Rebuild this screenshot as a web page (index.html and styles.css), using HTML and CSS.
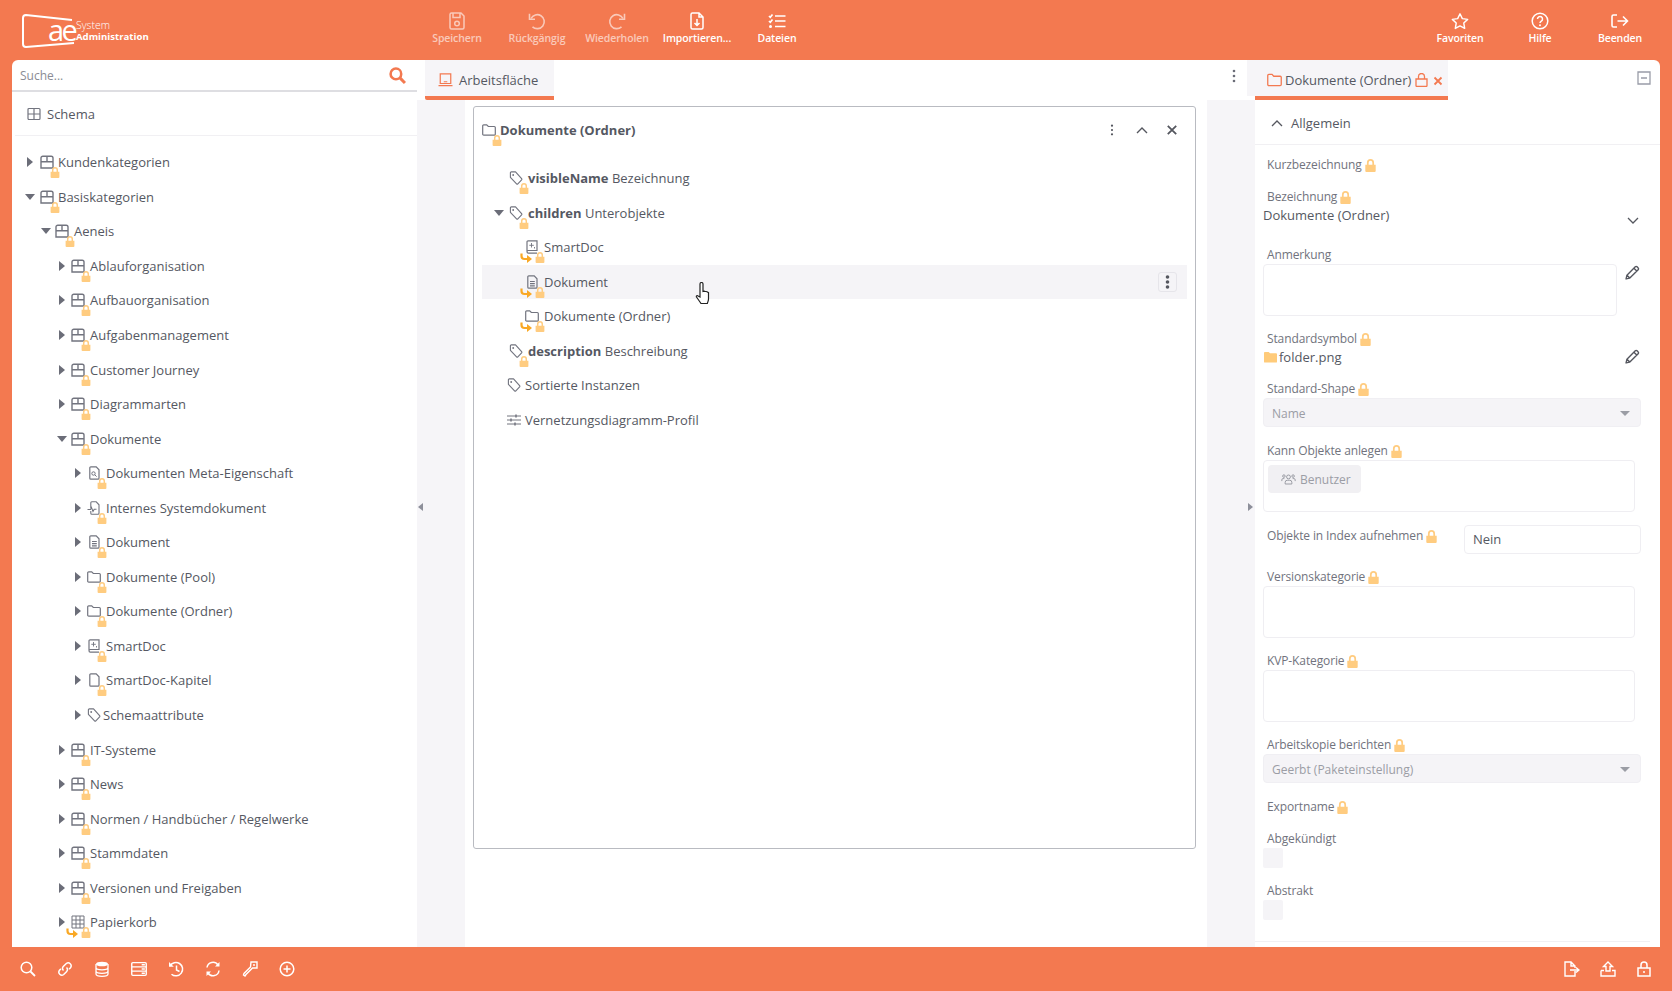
FILE: index.html
```html
<!DOCTYPE html>
<html lang="de">
<head>
  <meta charset="UTF-8">
  <title>System Administration</title>
  <link rel="stylesheet" href="styles.css">
</head>
<body>
  <svg class="sprite" width="0" height="0">
    <symbol id="box" viewBox="0 0 14 14"><path d="M1 13V3A1.800 1.800 0 0 1 2.800 1.200h8.400A1.800 1.800 0 0 1 13 3v10zM1 6.700h12M7 1.200v5.500" fill="none" stroke="currentColor" stroke-width="1.400"/></symbol>
    <symbol id="lock" viewBox="0 0 10 12"><path d="M0.200 5.200h9.600v5.800a1 1 0 0 1-1 1H1.200a1 1 0 0 1-1-1z" fill="#ffcc80"/><path d="M2.500 6V3.400a2.500 2.500 0 0 1 5 0V6" fill="none" stroke="#ffcc80" stroke-width="1.600"/></symbol>
    <symbol id="link" viewBox="0 0 12 10"><path d="M1.500 .5v2.500a3 3 0 0 0 3 3h3.500" fill="none" stroke="#f9a825" stroke-width="2.200"/><path d="M7 2l5 4-5 4z" fill="#f9a825"/></symbol>
    <symbol id="folder" viewBox="0 0 14 12"><path d="M.7 10.200V1.800a1 1 0 0 1 1-1h3l1.600 1.700h6a1 1 0 0 1 1 1v6.700a1 1 0 0 1-1 1H1.700a1 1 0 0 1-1-1z" fill="none" stroke="currentColor" stroke-width="1.200"/></symbol>
    <symbol id="tag" viewBox="0 0 14 15"><path d="M1 2a1 1 0 0 1 1-1h4.500l6.500 7.300a1 1 0 0 1 0 1.300l-4 4.200a1 1 0 0 1-1.400 0L1 6.800z" fill="none" stroke="currentColor" stroke-width="1.200" stroke-linejoin="round"/><circle cx="4" cy="4.300" r="1" fill="currentColor"/></symbol>
    <symbol id="doc" viewBox="0 0 14 14"><path d="M3.800 .8h5.400L12 3.800v8.400a1 1 0 0 1-1 1H3.800a1 1 0 0 1-1-1V1.800a1 1 0 0 1 1-1zM5 6.500h4.800M5 8.700h4.800M5 10.900h4.800" fill="none" stroke="currentColor" stroke-width="1.200"/></symbol>
    <symbol id="page" viewBox="0 0 14 14"><path d="M3.800 .8h5.400L12 3.800v8.400a1 1 0 0 1-1 1H3.800a1 1 0 0 1-1-1V1.800a1 1 0 0 1 1-1z" fill="none" stroke="currentColor" stroke-width="1.200"/></symbol>
    <symbol id="smart" viewBox="0 0 14 14"><path d="M2 11V1.800a1 1 0 0 1 1-1h9v9.700H3.300A1.300 1.300 0 0 0 2 11.800a1.300 1.300 0 0 0 1.300 1.300H12" fill="none" stroke="currentColor" stroke-width="1.200"/><path d="M6.500 3v4.500M4.300 5.300h4.500M9.500 7v1.500" stroke="currentColor" stroke-width=".9"/></symbol>
    <symbol id="metadoc" viewBox="0 0 14 14"><path d="M3.800 .8h5.400L12 3.800v8.400a1 1 0 0 1-1 1H3.800a1 1 0 0 1-1-1V1.800a1 1 0 0 1 1-1z" fill="none" stroke="currentColor" stroke-width="1.200"/><circle cx="6.500" cy="7.500" r="1.700" fill="none" stroke="currentColor"/><path d="M7.800 8.800l1.800 1.800" stroke="currentColor"/></symbol>
    <symbol id="sysdoc" viewBox="0 0 14 14"><path d="M3.800 7V1.800a1 1 0 0 1 1-1h4.400L12 3.800v8.400a1 1 0 0 1-1 1H4.800a1 1 0 0 1-1-1V10M.5 8.500h3l1-2 1.500 4 1.200-2.300H9.500" fill="none" stroke="currentColor" stroke-width="1.100"/></symbol>
    <symbol id="grid" viewBox="0 0 14 14"><path d="M1 1h12v12H1zM1 5h12M1 9h12M5 1v12M9 1v12" fill="none" stroke="currentColor" stroke-width="1"/></symbol>
    <symbol id="table" viewBox="0 0 14 14"><path d="M1 2.500a1 1 0 0 1 1-1h10a1 1 0 0 1 1 1v9a1 1 0 0 1-1 1H2a1 1 0 0 1-1-1zM1 7h12M7 1.500v11" fill="none" stroke="currentColor" stroke-width="1.200"/></symbol>
    <symbol id="sliders" viewBox="0 0 14 12"><path d="M0 2h14M0 6h14M0 10h14" stroke="currentColor" stroke-width="1"/><path d="M9 .5v3M4 4.500v3M8 8.500v3" stroke="currentColor" stroke-width="1.500"/></symbol>
    <symbol id="kebab" viewBox="0 0 4 14"><circle cx="2" cy="2" r="1.300" fill="currentColor"/><circle cx="2" cy="7" r="1.300" fill="currentColor"/><circle cx="2" cy="12" r="1.300" fill="currentColor"/></symbol>
    <symbol id="kebabbold" viewBox="0 0 4 14"><circle cx="2" cy="2" r="1.800" fill="currentColor"/><circle cx="2" cy="7" r="1.800" fill="currentColor"/><circle cx="2" cy="12" r="1.800" fill="currentColor"/></symbol>
    <symbol id="pencil" viewBox="0 0 14 14"><path d="M1 13l.8-3.500L9.600 1.700a1.200 1.200 0 0 1 1.700 0l1 1a1.200 1.200 0 0 1 0 1.700L4.500 12.200zM8.300 3l2.700 2.700M1.800 9.500l2.700 2.700" fill="none" stroke="currentColor" stroke-width="1.300" stroke-linejoin="round"/></symbol>
    <symbol id="save" viewBox="0 0 16 18"><path d="M1 2.500A1.500 1.500 0 0 1 2.500 1H12l3 3v11.500a1.500 1.500 0 0 1-1.500 1.500h-11A1.500 1.500 0 0 1 1 15.500zM4 1v4.500h7V1" fill="none" stroke="currentColor" stroke-width="1.500"/><circle cx="8" cy="11.500" r="2.300" fill="none" stroke="currentColor" stroke-width="1.500"/></symbol>
    <symbol id="undo" viewBox="0 0 18 18"><path d="M4.500 14.800A7 7 0 1 0 3 6.500" fill="none" stroke="currentColor" stroke-width="1.600"/><path d="M1.500 1.800v5.500H7" fill="none" stroke="currentColor" stroke-width="1.600"/></symbol>
    <symbol id="redo" viewBox="0 0 18 18"><path d="M13.500 14.800A7 7 0 1 1 15 6.500" fill="none" stroke="currentColor" stroke-width="1.600"/><path d="M16.500 1.800v5.500H11" fill="none" stroke="currentColor" stroke-width="1.600"/></symbol>
    <symbol id="import" viewBox="0 0 14 18"><path d="M1 2.500A1.500 1.500 0 0 1 2.500 1H9l4 4v10.500a1.500 1.500 0 0 1-1.500 1.500h-9A1.500 1.500 0 0 1 1 15.500zM9 1v4h4M7 7v6.500M4.500 11L7 13.500 9.500 11" fill="none" stroke="currentColor" stroke-width="1.500"/></symbol>
    <symbol id="files" viewBox="0 0 18 16"><path d="M1 3l1.300 1.300L4.500 1.500M1 8l1.300 1.300L4.500 6.500M7 3h10.500M7 8h10.500M7 13.500h10.500" fill="none" stroke="currentColor" stroke-width="1.700"/><circle cx="2.500" cy="13.500" r="1.500" fill="currentColor"/></symbol>
    <symbol id="star" viewBox="0 0 20 19"><path d="M10 1.500l2.600 5.400 5.900.8-4.300 4.100 1 5.900L10 15l-5.200 2.700 1-5.900L1.500 7.700l5.900-.8z" fill="none" stroke="currentColor" stroke-width="1.600" stroke-linejoin="round"/></symbol>
    <symbol id="help" viewBox="0 0 18 18"><circle cx="9" cy="9" r="7.800" fill="none" stroke="currentColor" stroke-width="1.500"/><path d="M6.500 7a2.500 2.500 0 1 1 3.800 2.100c-.9.600-1.300 1-1.300 2" fill="none" stroke="currentColor" stroke-width="1.500"/><circle cx="9" cy="13.200" r="1" fill="currentColor"/></symbol>
    <symbol id="exit" viewBox="0 0 18 14"><path d="M6 1H2.500A1.500 1.500 0 0 0 1 2.500v9A1.500 1.500 0 0 0 2.500 13H6M6.500 7h10M12 2.500L16.500 7 12 11.500" fill="none" stroke="currentColor" stroke-width="1.600"/></symbol>
    <symbol id="search" viewBox="0 0 16 16"><circle cx="6.500" cy="6.500" r="5.300" fill="none" stroke="currentColor" stroke-width="1.500"/><path d="M10.500 10.500L15 15" stroke="currentColor" stroke-width="1.800"/></symbol>
    <symbol id="searchbold" viewBox="0 0 16 16"><circle cx="6.500" cy="6.500" r="5" fill="none" stroke="currentColor" stroke-width="2.400"/><path d="M10.500 10.500L15 15" stroke="currentColor" stroke-width="2.800"/></symbol>
    <symbol id="chain" viewBox="0 0 16 16"><path d="M6.500 9.500a3 3 0 0 1 0-4.200l2.800-2.800a3 3 0 0 1 4.200 4.200l-1.400 1.400M9.500 6.500a3 3 0 0 1 0 4.200l-2.800 2.800a3 3 0 0 1-4.200-4.200l1.400-1.400" fill="none" stroke="currentColor" stroke-width="1.500"/></symbol>
    <symbol id="db" viewBox="0 0 14 16"><ellipse cx="7" cy="3" rx="6" ry="2.300" fill="currentColor"/><path d="M1 3v10c0 1.300 2.700 2.300 6 2.300s6-1 6-2.300V3M1 6.500c0 1.300 2.700 2.300 6 2.300s6-1 6-2.300M1 10c0 1.300 2.700 2.300 6 2.300s6-1 6-2.300" fill="none" stroke="currentColor" stroke-width="1.300"/></symbol>
    <symbol id="server" viewBox="0 0 15 14"><path d="M.7 2a1 1 0 0 1 1-1h11.600a1 1 0 0 1 1 1v10a1 1 0 0 1-1 1H1.700a1 1 0 0 1-1-1zM.7 5h13.600M.7 9h13.600M10 3h3M10 7h3M10 11h3" fill="none" stroke="currentColor" stroke-width="1.300"/></symbol>
    <symbol id="history" viewBox="0 0 16 16"><path d="M3.500 13.200A6.700 6.700 0 1 0 2 5" fill="none" stroke="currentColor" stroke-width="1.500"/><path d="M1 1v4.800h4.800" fill="currentColor"/><path d="M8.500 4.500V9l3 1.500" fill="none" stroke="currentColor" stroke-width="1.500"/></symbol>
    <symbol id="sync" viewBox="0 0 16 16"><path d="M2 6.500A6 6 0 0 1 13 4M14 9.500A6 6 0 0 1 3 12" fill="none" stroke="currentColor" stroke-width="1.500"/><path d="M14.500 1v4.500H10zM1.500 15v-4.500H6z" fill="currentColor"/></symbol>
    <symbol id="key" viewBox="0 0 16 16"><path d="M9 1h6v6h-4.500L4 13.500 3 15 1.500 14l.5-1.500L8.500 6z" fill="none" stroke="currentColor" stroke-width="1.400"/><circle cx="12" cy="4" r="1" fill="currentColor"/></symbol>
    <symbol id="plus" viewBox="0 0 16 16"><circle cx="8" cy="8" r="6.800" fill="none" stroke="currentColor" stroke-width="1.500"/><path d="M4.500 8h7M8 4.500v7" stroke="currentColor" stroke-width="1.500"/></symbol>
    <symbol id="fileout" viewBox="0 0 16 16"><path d="M11 10v5H1V1h6l4 4v2M7 1v4h4M6 9h8M12 6.500L15 9l-3 2.500" fill="none" stroke="currentColor" stroke-width="1.400"/></symbol>
    <symbol id="upload" viewBox="0 0 16 16"><path d="M8 1L3.500 5.500h2.500V10h4V5.500h2.500zM1 9.500V15h14V9.500h-3M4 9.500H1" fill="none" stroke="currentColor" stroke-width="1.400"/></symbol>
    <symbol id="unlock" viewBox="0 0 14 16"><path d="M1 7h12v8H1zM4 7V4a3 3 0 0 1 6 0v3M7 10v2" fill="none" stroke="currentColor" stroke-width="1.500"/></symbol>
    <symbol id="laptop" viewBox="0 0 16 16"><path d="M2 1h12v11H2zM0 14.500h16M6 10h4" fill="none" stroke="currentColor" stroke-width="1.400"/></symbol>
    <symbol id="lockline" viewBox="0 0 13 14"><path d="M1 6h11v6.500a1 1 0 0 1-1 1H2a1 1 0 0 1-1-1zM3.500 6V3.500a3 3 0 0 1 6 0V6" fill="none" stroke="currentColor" stroke-width="1.300"/></symbol>
  </svg>

  <header class="topbar">
    <div class="logo">
      <svg class="logo-frame" viewBox="0 0 58 36"><path d="M52 7L6 2Q3 2 3 5V31Q3 34 6 34L54 30" fill="none" stroke="#fff" stroke-width="2"/></svg>
      <span class="logo-ae">ae</span>
      <span class="logo-text"><span class="logo-small">System</span><b>Administration</b></span>
    </div>
    <nav class="tools">
      <a class="tool off"><svg class="tool-ic"><use href="#save"/></svg>Speichern</a>
      <a class="tool off"><svg class="tool-ic"><use href="#undo"/></svg>Rückgängig</a>
      <a class="tool off"><svg class="tool-ic"><use href="#redo"/></svg>Wiederholen</a>
      <a class="tool"><svg class="tool-ic"><use href="#import"/></svg>Importieren...</a>
      <a class="tool"><svg class="tool-ic"><use href="#files"/></svg>Dateien</a>
    </nav>
    <nav class="tools tools-right">
      <a class="tool"><svg class="tool-ic"><use href="#star"/></svg>Favoriten</a>
      <a class="tool"><svg class="tool-ic"><use href="#help"/></svg>Hilfe</a>
      <a class="tool"><svg class="tool-ic"><use href="#exit"/></svg>Beenden</a>
    </nav>
  </header>

  <main class="shell">
    <aside class="left">
      <div class="search">
        <span>Suche...</span>
        <svg class="search-ic"><use href="#searchbold"/></svg>
      </div>
      <div class="schema"><svg class="ic"><use href="#table"/></svg>Schema</div>
      <ul class="tree">
        <li class="row lv0"><i class="arr"></i><span class="ic-wrap"><svg class="ic"><use href="#box"/></svg><svg class="lk"><use href="#lock"/></svg></span>Kundenkategorien</li>
        <li class="row lv0"><i class="arr open"></i><span class="ic-wrap"><svg class="ic"><use href="#box"/></svg><svg class="lk"><use href="#lock"/></svg></span>Basiskategorien</li>
        <li class="row lv1"><i class="arr open"></i><span class="ic-wrap"><svg class="ic"><use href="#box"/></svg><svg class="lk"><use href="#lock"/></svg></span>Aeneis</li>
        <li class="row lv2"><i class="arr"></i><span class="ic-wrap"><svg class="ic"><use href="#box"/></svg><svg class="lk"><use href="#lock"/></svg></span>Ablauforganisation</li>
        <li class="row lv2"><i class="arr"></i><span class="ic-wrap"><svg class="ic"><use href="#box"/></svg><svg class="lk"><use href="#lock"/></svg></span>Aufbauorganisation</li>
        <li class="row lv2"><i class="arr"></i><span class="ic-wrap"><svg class="ic"><use href="#box"/></svg><svg class="lk"><use href="#lock"/></svg></span>Aufgabenmanagement</li>
        <li class="row lv2"><i class="arr"></i><span class="ic-wrap"><svg class="ic"><use href="#box"/></svg><svg class="lk"><use href="#lock"/></svg></span>Customer Journey</li>
        <li class="row lv2"><i class="arr"></i><span class="ic-wrap"><svg class="ic"><use href="#box"/></svg><svg class="lk"><use href="#lock"/></svg></span>Diagrammarten</li>
        <li class="row lv2"><i class="arr open"></i><span class="ic-wrap"><svg class="ic"><use href="#box"/></svg><svg class="lk"><use href="#lock"/></svg></span>Dokumente</li>
        <li class="row lv3"><i class="arr"></i><span class="ic-wrap"><svg class="ic"><use href="#metadoc"/></svg><svg class="lk"><use href="#lock"/></svg></span>Dokumenten Meta-Eigenschaft</li>
        <li class="row lv3"><i class="arr"></i><span class="ic-wrap"><svg class="ic"><use href="#sysdoc"/></svg><svg class="lk"><use href="#lock"/></svg></span>Internes Systemdokument</li>
        <li class="row lv3"><i class="arr"></i><span class="ic-wrap"><svg class="ic"><use href="#doc"/></svg><svg class="lk"><use href="#lock"/></svg></span>Dokument</li>
        <li class="row lv3"><i class="arr"></i><span class="ic-wrap"><svg class="ic"><use href="#folder"/></svg><svg class="lk"><use href="#lock"/></svg></span>Dokumente (Pool)</li>
        <li class="row lv3"><i class="arr"></i><span class="ic-wrap"><svg class="ic"><use href="#folder"/></svg><svg class="lk"><use href="#lock"/></svg></span>Dokumente (Ordner)</li>
        <li class="row lv3"><i class="arr"></i><span class="ic-wrap"><svg class="ic"><use href="#smart"/></svg><svg class="lk"><use href="#lock"/></svg></span>SmartDoc</li>
        <li class="row lv3"><i class="arr"></i><span class="ic-wrap"><svg class="ic"><use href="#page"/></svg><svg class="lk"><use href="#lock"/></svg></span>SmartDoc-Kapitel</li>
        <li class="row lv3 narrow"><i class="arr"></i><span class="ic-wrap"><svg class="ic"><use href="#tag"/></svg></span>Schemaattribute</li>
        <li class="row lv2"><i class="arr"></i><span class="ic-wrap"><svg class="ic"><use href="#box"/></svg><svg class="lk"><use href="#lock"/></svg></span>IT-Systeme</li>
        <li class="row lv2"><i class="arr"></i><span class="ic-wrap"><svg class="ic"><use href="#box"/></svg><svg class="lk"><use href="#lock"/></svg></span>News</li>
        <li class="row lv2"><i class="arr"></i><span class="ic-wrap"><svg class="ic"><use href="#box"/></svg><svg class="lk"><use href="#lock"/></svg></span>Normen / Handbücher / Regelwerke</li>
        <li class="row lv2"><i class="arr"></i><span class="ic-wrap"><svg class="ic"><use href="#box"/></svg><svg class="lk"><use href="#lock"/></svg></span>Stammdaten</li>
        <li class="row lv2"><i class="arr"></i><span class="ic-wrap"><svg class="ic"><use href="#box"/></svg><svg class="lk"><use href="#lock"/></svg></span>Versionen und Freigaben</li>
        <li class="row lv2"><i class="arr"></i><span class="ic-wrap"><svg class="ic"><use href="#grid"/></svg><svg class="lnk"><use href="#link"/></svg><svg class="lk"><use href="#lock"/></svg></span>Papierkorb</li>
      </ul>
    </aside>

    <section class="center">
      <div class="tabbar">
        <div class="tab"><svg class="tab-ic"><use href="#laptop"/></svg>Arbeitsfläche</div>
        <svg class="tab-kebab"><use href="#kebab"/></svg>
      </div>
      <div class="stage">
        <div class="strip strip-left"><i class="side-arr side-l"></i></div>
        <div class="canvas">
          <div class="card">
            <div class="card-head">
              <span class="ic-wrap card-ic"><svg class="ic"><use href="#folder"/></svg><svg class="lk"><use href="#lock"/></svg></span>
              <b>Dokumente (Ordner)</b>
              <span class="card-actions">
                <svg class="act act-kebab"><use href="#kebab"/></svg>
                <svg class="act" viewBox="0 0 12 8"><path d="M1 7l5-5 5 5" fill="none" stroke="currentColor" stroke-width="1.400"/></svg>
                <svg class="act" viewBox="0 0 10 10"><path d="M1.500 1.500l7 7M8.500 1.500l-7 7" stroke="currentColor" stroke-width="1.500"/></svg>
              </span>
            </div>
            <ul class="attrs">
              <li class="attr"><span class="ic-wrap"><svg class="ic"><use href="#tag"/></svg><svg class="lk"><use href="#lock"/></svg></span><b>visibleName</b>&nbsp;Bezeichnung</li>
              <li class="attr"><i class="arr open attr-arr"></i><span class="ic-wrap"><svg class="ic"><use href="#tag"/></svg><svg class="lk"><use href="#lock"/></svg></span><b>children</b>&nbsp;Unterobjekte</li>
              <li class="attr sub"><span class="ic-wrap"><svg class="ic"><use href="#smart"/></svg><svg class="lnk"><use href="#link"/></svg><svg class="lk"><use href="#lock"/></svg></span>SmartDoc</li>
              <li class="attr sub hover"><span class="ic-wrap"><svg class="ic"><use href="#doc"/></svg><svg class="lnk"><use href="#link"/></svg><svg class="lk"><use href="#lock"/></svg></span>Dokument<span class="row-btn"><svg class="row-kebab"><use href="#kebabbold"/></svg></span></li>
              <li class="attr sub"><span class="ic-wrap"><svg class="ic"><use href="#folder"/></svg><svg class="lnk"><use href="#link"/></svg><svg class="lk"><use href="#lock"/></svg></span>Dokumente (Ordner)</li>
              <li class="attr"><span class="ic-wrap"><svg class="ic"><use href="#tag"/></svg><svg class="lk"><use href="#lock"/></svg></span><b>description</b>&nbsp;Beschreibung</li>
              <li class="attr flat"><span class="ic-wrap"><svg class="ic"><use href="#tag"/></svg></span>Sortierte Instanzen</li>
              <li class="attr flat"><span class="ic-wrap"><svg class="ic"><use href="#sliders"/></svg></span>Vernetzungsdiagramm-Profil</li>
            </ul>
          </div>
          <svg class="cursor" viewBox="0 0 16 24"><path d="M5 2a1.500 1.500 0 0 1 3 0v7.500l1-.3 1 .2 1 .1 1 .3 1.500.8v6.400c0 2-.8 3-1.200 4.500H6c-.8-1.500-3-4-4.500-6.500-.5-1 .7-1.800 1.600-1L5 15z" fill="#fff" stroke="#222" stroke-width="1.200"/></svg>
        </div>
        <div class="strip strip-right"></div>
      </div>
    </section>

    <aside class="right">
      <div class="tabbar right-tabs">
        <div class="tab tab-doc"><svg class="tab-ic"><use href="#folder"/></svg>Dokumente (Ordner)<svg class="tab-lock"><use href="#lockline"/></svg><svg class="tab-x" viewBox="0 0 10 10"><path d="M1.500 1.500l7 7M8.500 1.500l-7 7" stroke="currentColor" stroke-width="1.800"/></svg></div>
        <svg class="minimize" viewBox="0 0 14 14"><path d="M1 1h12v12H1zM4 7h6" fill="none" stroke="#999ca8" stroke-width="1.300"/></svg>
      </div>
      <div class="props">
        <i class="side-arr side-r"></i>
        <div class="section-head"><svg class="chev" viewBox="0 0 12 8"><path d="M1 7l5-5 5 5" fill="none" stroke="currentColor" stroke-width="1.300"/></svg>Allgemein</div>
        <form class="form">
          <div class="label"><span>Kurzbezeichnung</span><svg class="lock-lg"><use href="#lock"/></svg></div>

          <div class="label mt14"><span>Bezeichnung</span><svg class="lock-lg"><use href="#lock"/></svg></div>
          <div class="value">Dokumente (Ordner)<svg class="val-chev" viewBox="0 0 12 8"><path d="M1 1l5 5 5-5" fill="none" stroke="currentColor" stroke-width="1.300"/></svg></div>

          <div class="label mt22">Anmerkung</div>
          <div class="with-edit"><div class="box box-note"></div><svg class="pen pen-note"><use href="#pencil"/></svg></div>

          <div class="label mt14"><span>Standardsymbol</span><svg class="lock-lg"><use href="#lock"/></svg></div>
          <div class="value value-file"><svg class="file-ic" viewBox="0 0 14 12"><path d="M0 1.500A1 1 0 0 1 1 .5h4l1.500 1.500h6.500a1 1 0 0 1 1 1V11a1 1 0 0 1-1 1H1a1 1 0 0 1-1-1z" fill="#ffcb7a"/></svg>folder.png<svg class="pen pen-file"><use href="#pencil"/></svg></div>

          <div class="label mt14"><span>Standard-Shape</span><svg class="lock-lg"><use href="#lock"/></svg></div>
          <div class="select">Name<i class="sel-arr"></i></div>

          <div class="label mt15"><span>Kann Objekte anlegen</span><svg class="lock-lg"><use href="#lock"/></svg></div>
          <div class="box box-wide"><span class="chip"><svg class="chip-ic" viewBox="0 0 18 14"><g fill="none" stroke="currentColor" stroke-width="1.200"><circle cx="9" cy="4.500" r="2.300"/><path d="M5 13v-2a2.500 2.500 0 0 1 2.500-2.500h3A2.500 2.500 0 0 1 13 11v2z"/><circle cx="3.500" cy="3.500" r="1.500"/><circle cx="14.500" cy="3.500" r="1.500"/><path d="M1 9.500V8a1.500 1.500 0 0 1 1.500-1.500h1.500M17 9.500V8a1.500 1.500 0 0 0-1.500-1.500H14"/></g></svg>Benutzer</span></div>

          <div class="index-row">
            <div class="label index-label"><span>Objekte in Index aufnehmen</span><svg class="lock-lg"><use href="#lock"/></svg></div>
            <div class="input">Nein</div>
          </div>

          <div class="label mt14"><span>Versionskategorie</span><svg class="lock-lg"><use href="#lock"/></svg></div>
          <div class="box box-wide"></div>

          <div class="label mt14"><span>KVP-Kategorie</span><svg class="lock-lg"><use href="#lock"/></svg></div>
          <div class="box box-wide"></div>

          <div class="label mt14"><span>Arbeitskopie berichten</span><svg class="lock-lg"><use href="#lock"/></svg></div>
          <div class="select">Geerbt (Paketeinstellung)<i class="sel-arr"></i></div>

          <div class="label mt15"><span>Exportname</span><svg class="lock-lg"><use href="#lock"/></svg></div>

          <div class="label mt14">Abgekündigt</div>
          <div class="check"></div>

          <div class="label mt14">Abstrakt</div>
          <div class="check"></div>

          <div class="form-end"></div>
        </form>
      </div>
    </aside>
  </main>

  <footer class="bottombar">
    <div class="foot-group">
      <svg class="foot-ic"><use href="#search"/></svg>
      <svg class="foot-ic"><use href="#chain"/></svg>
      <svg class="foot-ic"><use href="#db"/></svg>
      <svg class="foot-ic"><use href="#server"/></svg>
      <svg class="foot-ic"><use href="#history"/></svg>
      <svg class="foot-ic"><use href="#sync"/></svg>
      <svg class="foot-ic"><use href="#key"/></svg>
      <svg class="foot-ic"><use href="#plus"/></svg>
    </div>
    <div class="foot-group foot-right">
      <svg class="foot-ic"><use href="#fileout"/></svg>
      <svg class="foot-ic"><use href="#upload"/></svg>
      <svg class="foot-ic"><use href="#unlock"/></svg>
    </div>
  </footer>
</body>
</html>
```

FILE: styles.css
```css
* {
  box-sizing: border-box;
}

html, body {
  height: 100%;
}

body {
  margin: 0;
  display: flex;
  flex-direction: column;
  height: 991px;
  overflow: hidden;
  background-color: #f37950;
  font-family: "Open Sans", sans-serif;
  font-size: 13px;
  color: #555862;
}

.sprite {
  position: absolute;
}

ul {
  list-style: none;
  margin: 0;
  padding: 0;
}

/* top bar */
.topbar {
  height: 60px;
  flex: none;
  display: flex;
  color: #fff;
  position: relative;
}

.logo {
  position: relative;
  width: 417px;
  padding: 15px 0 0 26px;
  display: flex;
}

.logo-frame {
  position: absolute;
  left: 20px;
  top: 13px;
  width: 58px;
  height: 36px;
}

.logo-ae {
  font-size: 29px;
  line-height: 30px;
  letter-spacing: -2.500px;
  margin-left: 22px;
  width: 28px;
  flex: none;
}

.logo-text {
  display: flex;
  flex-direction: column;
  font-size: 9.600px;
  line-height: 12px;
  padding: 4px 0 0 0;
}

.logo-small {
  font-size: 10.500px;
  font-weight: 300;
}

.tools {
  display: flex;
}

.tools-right {
  margin-left: auto;
  margin-right: 12px;
}

.tool {
  width: 80px;
  display: flex;
  flex-direction: column;
  align-items: center;
  padding-top: 12px;
  font-size: 10.500px;
  font-weight: 600;
  letter-spacing: -0.1px;
  line-height: 16px;
  white-space: nowrap;
}

.tool.off {
  opacity: 0.6;
}

.tool-ic {
  width: 18px;
  height: 18px;
}

/* main frame */
.shell {
  flex: 1;
  display: flex;
  margin: 0 12px;
  background-color: #fff;
  border-radius: 6px 6px 0 0;
  overflow: hidden;
  min-height: 0;
}

.left {
  width: 405px;
  flex: none;
  overflow: hidden;
}

.search {
  height: 32px;
  border-bottom: 2px solid #dedee2;
  display: flex;
  align-items: center;
  justify-content: space-between;
  padding: 0 11px 0 8px;
  font-size: 12px;
  color: #8a8c94;
}

.search-ic {
  width: 17px;
  height: 17px;
  color: #f37950;
}

.schema {
  height: 44px;
  display: flex;
  align-items: center;
  gap: 6px;
  padding-left: 12px;
  margin-left: 3px;
  border-bottom: 1px solid #f1f0f3;
}

.tree {
  padding-top: 9px;
}

.row {
  height: 34.550px;
  display: flex;
  align-items: center;
  white-space: nowrap;
}

.lv0 { padding-left: 14px; }
.lv1 { padding-left: 30px; }
.lv2 { padding-left: 46px; }
.lv3 { padding-left: 62px; }

.lv0 .arr {
  margin-right: 4px;
}

.lv1 .ic-wrap, .lv2 .ic-wrap, .lv3 .ic-wrap {
  margin-right: 5px;
}

.arr {
  width: 10px;
  margin-right: 3px;
  flex: none;
  height: 10px;
  position: relative;
}

.arr::before {
  content: "";
  position: absolute;
  left: 1px;
  top: 0;
  border-style: solid;
  border-width: 5px 0 5px 6px;
  border-color: transparent transparent transparent #6b6d78;
}

.arr.open::before {
  left: -1px;
  top: 2px;
  border-width: 6px 5px 0 5px;
  border-color: #6b6d78 transparent transparent transparent;
}

.ic-wrap {
  position: relative;
  width: 14px;
  height: 14px;
  margin-right: 4px;
  flex: none;
  display: block;
}

.row.narrow .ic-wrap {
  margin-right: 2px;
}

.ic {
  width: 14px;
  height: 14px;
  display: block;
  color: #72747f;
}

.lk {
  position: absolute;
  left: 10px;
  top: 12px;
  width: 10px;
  height: 11px;
}

.lnk {
  position: absolute;
  left: -5px;
  top: 13px;
  width: 12px;
  height: 10px;
}

/* center */
.center {
  flex: 1;
  min-width: 0;
  display: flex;
  flex-direction: column;
}

.tabbar {
  height: 40px;
  flex: none;
  display: flex;
  position: relative;
}

.tab {
  margin-left: 8px;
  height: 40px;
  padding: 4px 0 0 13px;
  width: 129px;
  background-color: #f6f5f8;
  border-bottom: 4px solid #f37950;
  border-radius: 0 0 0 2px;
  display: flex;
  align-items: center;
  gap: 6px;
  white-space: nowrap;
}

.tab-ic {
  width: 15px;
  height: 14px;
  color: #f37950;
}

.tab-kebab {
  position: absolute;
  right: 11px;
  top: 9px;
  width: 4px;
  height: 14px;
  color: #6b6d78;
}

.stage {
  flex: 1;
  display: flex;
  min-height: 0;
}

.strip {
  background-color: #f6f5f8;
  flex: none;
}

.strip-left {
  width: 48px;
  position: relative;
}

.strip-right {
  width: 40px;
}

.side-arr {
  position: absolute;
  top: 403px;
  border-style: solid;
  border-width: 4px 5px 4px 0;
  border-color: transparent #8d8f9a transparent transparent;
}

.side-l {
  left: 1px;
}

.side-r {
  left: -7px;
  border-width: 4px 0 4px 5px;
  border-color: transparent transparent transparent #8d8f9a;
}

.canvas {
  flex: 1;
  position: relative;
  padding: 6px 11px 0 8px;
}

.card {
  height: 743px;
  border: 1px solid #b9bbc1;
  border-radius: 3px;
  padding: 0 8px;
}

.card-head {
  height: 46px;
  display: flex;
  align-items: center;
}

.card-ic {
  margin: 0 4px 0 0;
}

.card-actions {
  margin-left: auto;
  display: flex;
  align-items: center;
  padding-right: 9px;
  color: #55575f;
}

.act {
  width: 12px;
  height: 12px;
  margin-left: 18px;
}

.act-kebab {
  width: 4px;
  height: 12px;
  margin-right: 4px;
}

.attrs {
  padding-top: 8px;
}

.attr {
  height: 34.500px;
  display: flex;
  align-items: center;
  padding-left: 27px;
  white-space: nowrap;
  position: relative;
}

.attr > .ic-wrap {
  margin-right: 5px;
}

.attr-arr {
  position: absolute;
  left: 13px;
  top: 12px;
}

.attr.sub {
  padding-left: 43px;
}

.attr.sub .ic-wrap {
  margin-right: 5px;
}

.attr.flat {
  padding-left: 25px;
}

.attr.flat .ic-wrap {
  margin-right: 4px;
}

.hover {
  background-color: #f5f4f7;
}

.row-btn {
  position: absolute;
  right: 10px;
  top: 7px;
  width: 19px;
  height: 20px;
  border: 1px solid #e6e5ea;
  border-radius: 3px;
  display: flex;
  align-items: center;
  justify-content: center;
}

.row-kebab {
  width: 5px;
  height: 14px;
  color: #55575f;
}

.cursor {
  position: absolute;
  left: 230px;
  top: 182px;
  width: 16px;
  height: 24px;
}

/* right panel */
.right {
  width: 413px;
  flex: none;
  display: flex;
  flex-direction: column;
}

.tab-doc {
  margin-left: 0;
  width: 201px;
  padding: 0 0 0 20px;
  background: linear-gradient(#f6f5f8, #f6f5f8) 0 0 / 100% 36px no-repeat;
  border-bottom: none;
  position: relative;
  gap: 3px;
}

.tab-doc::after {
  content: "";
  position: absolute;
  left: 8px;
  right: 0;
  bottom: 0;
  height: 4px;
  background-color: #f37950;
}

.tab-lock {
  width: 13px;
  height: 14px;
  color: #f37950;
  margin-left: 1px;
}

.tab-x {
  width: 10px;
  height: 10px;
  margin-left: 2px;
  margin-top: 2px;
  color: #f37950;
}

.minimize {
  position: absolute;
  right: 9px;
  top: 11px;
  width: 14px;
  height: 14px;
}

.props {
  flex: 1;
  min-height: 0;
  margin-left: 8px;
  position: relative;
  box-shadow: -8px 0 0 #f6f5f8;
}

.section-head {
  height: 45px;
  display: flex;
  align-items: center;
  padding: 2px 0 0 16px;
  gap: 8px;
  border-bottom: 1px solid #f1f0f3;
}

.chev {
  width: 12px;
  height: 8px;
  color: #55575f;
}

.form {
  padding: 11px 0 0 8px;
}

.label {
  height: 18px;
  padding-left: 4px;
  font-size: 12px;
  letter-spacing: -0.12px;
  line-height: 18px;
  color: #71737d;
  display: flex;
  align-items: center;
  gap: 3px;
  white-space: nowrap;
}

.index-label {
  margin-top: 2px;
}

.lock-lg {
  width: 11px;
  height: 13px;
}

.mt14 { margin-top: 14px; }
.mt15 { margin-top: 15px; }
.mt22 { margin-top: 22px; }

.value {
  height: 18px;
  line-height: 18px;
  position: relative;
  display: flex;
  align-items: center;
}

.val-chev {
  position: absolute;
  right: 21px;
  top: 11px;
  width: 12px;
  height: 8px;
  color: #55575f;
}

.with-edit {
  position: relative;
}

.box {
  border: 1px solid #efeef2;
  border-radius: 4px;
  height: 52px;
}

.box-note {
  width: 354px;
}

.box-wide {
  width: 372px;
  padding: 4px;
}

.pen {
  position: absolute;
  width: 15px;
  height: 15px;
  color: #55575f;
}

.pen-note {
  right: 20px;
  top: 1px;
}

.pen-file {
  right: 20px;
  top: 1px;
}

.value-file {
  gap: 2px;
}

.file-ic {
  width: 13px;
  height: 12px;
  margin-left: 1px;
}

.select {
  width: 378px;
  height: 29px;
  background-color: #f5f4f7;
  border: 1px solid #f0eff3;
  border-radius: 4px;
  padding-left: 8px;
  font-size: 12px;
  line-height: 29px;
  color: #9b9da5;
  position: relative;
}

.sel-arr {
  position: absolute;
  right: 10px;
  top: 12px;
  border-style: solid;
  border-width: 5px 5px 0 5px;
  border-color: #9b9da5 transparent transparent transparent;
}

.chip {
  height: 28px;
  width: 93px;
  background-color: #f1f0f3;
  border-radius: 4px;
  display: flex;
  align-items: center;
  padding-left: 13px;
  gap: 4px;
  font-size: 12px;
  color: #9b9da5;
}

.chip-ic {
  width: 15px;
  height: 12px;
}

.index-row {
  display: flex;
  margin-top: 13px;
  width: 378px;
  justify-content: space-between;
}

.input {
  width: 177px;
  height: 29px;
  border: 1px solid #efeef2;
  border-radius: 4px;
  padding-left: 8px;
  line-height: 27px;
}

.check {
  width: 20px;
  height: 20px;
  background-color: #f5f4f7;
  border-radius: 2px;
}

.form-end {
  margin: 21px 10px 0 -8px;
  border-bottom: 1px solid #f1f0f3;
}

/* bottom bar */
.bottombar {
  height: 44px;
  flex: none;
  display: flex;
  justify-content: space-between;
  align-items: center;
  padding: 0 20px;
  color: #fff;
}

.foot-group {
  display: flex;
  gap: 21px;
}

.foot-right {
  gap: 20px;
}

.foot-ic {
  width: 16px;
  height: 16px;
}
```
